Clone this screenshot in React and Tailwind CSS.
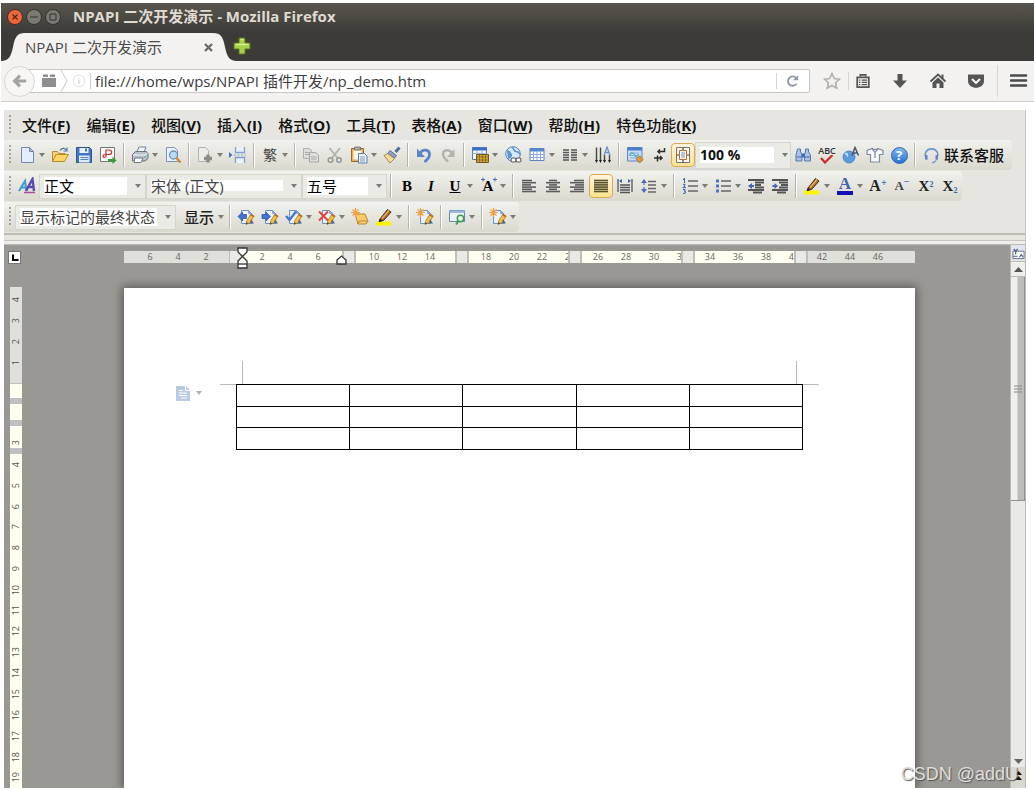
import React from 'react';
import { clsx } from 'clsx';

const Svg = ({ className = 'size-[18px]', box = '0 0 18 18', children }) => (
  <svg viewBox={box} className={clsx('shrink-0', className)} fill="none" aria-hidden="true">
    {children}
  </svg>
);

const Arrow = () => (
  <Svg box="0 0 6 4" className="w-[6px] h-[4px]"><path d="M0 0h6L3 4z" fill="#7b7b77" /></Svg>
);

/* ---------- toolbar icons ---------- */

const Lines = ({ rows, color = '#5c5c5c' }) => (
  <>
    {rows.map(([x1, x2], i) => (
      <path key={i} d={`M${x1} ${3.5 + i * 2.2}H${x2}`} stroke={color} strokeWidth="1.6" />
    ))}
  </>
);

// page with a pencil, shared by the review buttons
const PagePencil = ({ children }) => (
  <>
    <path d="M4.5 2.5h7l3 3v10h-10z" fill="#e9f1fb" stroke="#6d8fc4" />
    <path d="M11.5 2.500v3h3z" fill="#8fabd6" stroke="#6d8fc4" strokeWidth=".6" />
    <path d="M9 16.500l.8-4 4.200-6.500 3.200 2-4.200 6.500z" fill="#f7bf3f" stroke="#a0731f" strokeWidth=".7" />
    <path d="M13.500 6.500l3.400 2.200" stroke="#b4683c" strokeWidth="1.600" />
    <path d="M14 11l3 4.500h-4z" fill="#59667c" />
    <path d="M9 16.500l.5-2.200 1.600 1z" fill="#333" />
    {children}
  </>
);

const Spark = () => (
  <path d="M4.500 0v9M0 4.500h9M1.500 1.500l6 6M7.500 1.500l-6 6" stroke="#f0a040" strokeWidth="1.200" />
);

const Pen = () => (
  <>
    <path d="M1 13.5h15v4H1z" fill="#fdf500" />
    <path d="M5 11l7.500-9.500 3.500 2.600-7.500 8.400L4 13.500z" fill="#b06a26" stroke="#3f2a16" strokeWidth="1" />
    <path d="M7 10.500l7-8" stroke="#efb25c" strokeWidth="1.400" />
    <path d="M5 11l3 1.600L4 14z" fill="#222" />
  </>
);

const icons = {
  newDoc: <><path d="M3.500 1.500h8l4 4v11h-12z" fill="#e3edfb" stroke="#7289b3" /><path d="M11.500 1.500v4h4z" fill="#aebfdc" stroke="#7289b3" /></>,
  open: <><path d="M1.500 15.500V5.500h5l1.500 2h6v3" fill="#f5d27a" stroke="#b88a28" /><path d="M1.500 15.500l3.500-7h12.500l-4 7z" fill="#fbd566" stroke="#b88a28" /><path d="M9 4.500c2-3 5-2.500 6-.5m1-2.500v3.500h-3.500" stroke="#4f71a6" strokeWidth="1.200" /></>,
  save: <><path d="M1.500 1.500h13l2 2v13h-15z" fill="#4377c4" stroke="#295596" /><path d="M4.500 2h9v5h-9z" fill="#eaf1fb" /><path d="M4 9.500h10.500v7H4z" fill="#dfe9f7" /><path d="M5.500 11.500h8M5.500 13.500h8" stroke="#5a84c2" /><path d="M10 2.500h2v3h-2z" fill="#4377c4" /></>,
  pdf: <><path d="M1.500 1.500h14v14h-14z" fill="#f7f7f7" stroke="#777" /><path d="M7 11V4h3c3.500 0 3.500 4.500 0 4.500H6.500c-3 0-3.500 4 0 2.500" stroke="#c8323c" strokeWidth="1.200" /><path d="M9 13h4.500v-2.500l4 4-4 3.500v-2.500H9z" fill="#3c9a38" /></>,
  print: <><path d="M6 6l2-5h7l-2 5z" fill="#f4f8ff" stroke="#6d7f9c" /><path d="M1.500 8.500l3-3h11l1.500 2v5l-3 2.500H1.500z" fill="#b9c0cc" stroke="#6a7380" /><path d="M2 9h12l2.500-2" stroke="#f3f5f8" /><path d="M4 12h8l-2 4.500H3z" fill="#fff" stroke="#6b7686" /><path d="M13 11h2" stroke="#4c6" /></>,
  preview: <><path d="M2.500 1.500h8l3 3v11h-11z" fill="#e8f1fc" stroke="#7d93bb" /><circle cx="9.500" cy="9" r="4" fill="#b9dcf4" stroke="#6c95bd" strokeWidth="1.300" /><path d="M12.500 12l4 4.500" stroke="#d58a2c" strokeWidth="2.600" /></>,
  addPage: <><path d="M2.500 1.500h7l3 3v11h-10z" fill="#ececea" stroke="#b4b4b1" /><path d="M12 8.500v8M8 12.500h8" stroke="#8c8c8a" strokeWidth="3.400" /></>,
  pageBreak: <><path d="M6.500 1v5.500h9V1M6.500 17v-5.500h9V17" fill="#eaf1fb" stroke="#7f9fce" strokeWidth="1.300" /><path d="M0 6l3.500 3L0 12z" fill="#4a74b8" /><path d="M5 9h12" stroke="#8ba6d0" strokeDasharray="2 1.500" /></>,
  copy: <><path d="M1.500 2.500h6l2 2v8h-8z" fill="#dededc" stroke="#b0b0ae" /><path d="M7.500 6.500h6l3 2.500v7h-9z" fill="#dededc" stroke="#a6a6a4" /><path d="M3 6.500h4M3 8.500h4M9 11h5.500M9 13h5.500" stroke="#aaa" /></>,
  cut: <><path d="M3.500 2l8 10M14 2L6 12" stroke="#b0b0ae" strokeWidth="1.700" /><circle cx="4.500" cy="14" r="2.300" stroke="#989896" strokeWidth="1.500" /><circle cx="13" cy="14" r="2.300" stroke="#989896" strokeWidth="1.500" /></>,
  paste: <><path d="M1.500 2.500h12v13h-12z" fill="#e5b05a" stroke="#96692a" /><path d="M3.500 4.500h8v9h-8z" fill="#fff7e6" /><path d="M4.500 1h6v3h-6z" fill="#a8adb5" stroke="#666" strokeWidth=".7" /><path d="M8.500 7.500h6l2.500 2.500v7H8.500z" fill="#eef4fd" stroke="#5c7db3" /><path d="M10 11h5M10 13h5M10 15h5" stroke="#7d9bca" /></>,
  brush: <><path d="M16.500 1.500l-4 4.500" stroke="#4f6ca3" strokeWidth="3" /><path d="M7 4.500l6.500 5-2 2.500-7-4.500z" fill="#8aa0cc" stroke="#5d709b" /><path d="M4.500 7.500l7 5-4.500 4.500L1 9.500z" fill="#f3dca0" stroke="#a8863c" /></>,
  undo: <><path d="M5 7c3.500-4.500 9.500-3.500 9.500 1.500 0 3-2 5-5 7.500" stroke="#5b83c8" strokeWidth="2.800" /><path d="M2 2.500v8.500h8z" fill="#5b83c8" /></>,
  redo: <><path d="M13 7c-3-4-9-3.500-9 1 0 3 2 5 5 7.500" stroke="#b3b3b1" strokeWidth="2.400" /><path d="M15.500 3v8H8z" fill="#b3b3b1" /></>,
  tableEdit: <><path d="M1.500 1.500h14v12h-14z" fill="#f0f5fc" stroke="#587bb4" /><path d="M1.500 1.500h14v3h-14z" fill="#3f6fc0" /><path d="M1.500 7.500h14M6 4v9M11 4v4" stroke="#9fb4d8" /><path d="M5.500 8.500h12v8h-12z" fill="#d3a638" stroke="#775817" /><path d="M5.500 11h12M5.500 14h12M8.500 8.500v8M11.500 8.500v8M14.500 8.500v8" stroke="#7c5f20" strokeWidth=".7" /></>,
  globeLink: <><circle cx="9" cy="8" r="7.300" fill="#d7e8f8" stroke="#4f83c0" /><path d="M3 5c2 0 3 1 4 3s-1 4-3 4M8 1.500c3 1 1 4 4 4s3 1 4 3" fill="#5b95d6" stroke="#5b95d6" strokeWidth="1.500" /><rect x="7" y="12" width="5" height="4" rx="1.800" fill="#fff" stroke="#555" strokeWidth="1.100" /><rect x="12" y="12" width="5" height="4" rx="1.800" fill="#fff" stroke="#555" strokeWidth="1.100" /></>,
  table: <><path d="M2 2.500h14v12H2z" fill="#fff" stroke="#5d83bf" /><path d="M2 2.500h14v3H2z" fill="#5587d0" /><path d="M2 8.500h14M2 11.500h14M5.500 5v9M9 5v9M12.500 5v9" stroke="#8faad3" /></>,
  columns: <path d="M2 4h6M2 6.500h6M2 9h6M2 11.500h6M2 14h6M10 4h6M10 6.500h6M10 9h6M10 11.500h6M10 14h6" stroke="#555" strokeWidth="1.700" />,
  textDir: <><path d="M2.500 1.500v13M6.500 1.500v13M10.500 9v6M15.500 9v6" stroke="#444" strokeWidth="1.400" /><path d="M10 9.500L13 1l3 8.500M11 6.500h4" stroke="#6d91cb" strokeWidth="1.300" /><path d="M1 14h3l-1.500 3zM5 14h3l-1.500 3zM9 14h3l-1.500 3zM14 14h3l-1.500 3z" fill="#222" /></>,
  drawing: <><path d="M1.500 1.500h14.500v13.500H1.500z" fill="#c6dcf2" stroke="#5f86c2" /><path d="M1.500 1.500h14.500v3H1.500z" fill="#4d7ecb" /><path d="M4 7h9M4 9.500h9M4 12h6" stroke="#8fb5d8" /><path d="M3.500 10c1-4 4-4 5-1s3 1 4-1" stroke="#5faab9" strokeWidth="1.300" /><path d="M10 12.500l4-2.500 3 3.500-3.500 3.500z" fill="#e19b3c" stroke="#9a6320" strokeWidth=".7" /></>,
  marks: <path d="M14.500 2v3.500H8M10 3.500L8 5.500l2 2M4 12h8M10 10l2 2-2 2M7.500 9.500v6" stroke="#2d2d2d" strokeWidth="1.500" />,
  fitPage: <><path d="M2.500 1.500h13v15h-13z" fill="#fdf9ec" stroke="#777" /><path d="M5.500 4.500h7v9h-7z" fill="#fff" stroke="#c06a2c" /><path d="M7 7h4M7 9h4M7 11h4" stroke="#7e8da8" /><path d="M9 1.500v2.500M9 14v2.500M2.500 9H5M13 9h2.500" stroke="#444" strokeWidth="1.200" /></>,
  find: <><path d="M3.500 3h3v3l1.500 2v7h-6V9zM11.500 3h3v3l2 3v6h-6V8l1-2z" fill="#a9c2ea" stroke="#5877b2" /><path d="M7.500 7.500h3v4h-3z" fill="#4a6cab" /><path d="M2.500 11h5M11 11h5" stroke="#4a6cab" /></>,
  globeA: <><circle cx="7" cy="11" r="6" fill="#5a9be0" stroke="#4479bd" strokeWidth=".8" /><path d="M3 8c2-1 3 1 2 2.500" stroke="#c6e2f8" strokeWidth="1.700" /><path d="M10 9.500L13 1.500l3.500 8M11 7h4.500" stroke="#4b5468" strokeWidth="1.500" /></>,
  shirt: <><path d="M6 2.500c1.500 1.500 4.500 1.500 6 0l5 2v4h-3.500v7.500h-9V8.500H1v-4z" fill="#f5f7fa" stroke="#7f8b9f" strokeWidth="1.200" /><path d="M6 3l3 3.500L12 3M9 7v5" stroke="#6e7b91" strokeWidth="1.100" /></>,
  headset: <><path d="M4 12.500C0 7 4 2 9 2s9 5 5 10.500" stroke="#7296d4" strokeWidth="1.700" /><path d="M3.500 8.500v5M14.500 8.500v5" stroke="#5e85ca" strokeWidth="2.500" /><path d="M14 14c-1 2-2.500 2.500-4.500 2.500" stroke="#7296d4" strokeWidth="1.200" /></>,
  styles: <><path d="M1 14L7 4l1.500 10M3.500 10.500H8" stroke="#3e9bd0" strokeWidth="2" /><path d="M8 14l6.500-12L16 14M10.500 10H16" stroke="#5a4bb0" strokeWidth="2.400" /><path d="M6 15.500h11" stroke="#a94b9b" strokeWidth="1.500" /></>,
  alignLeft: <Lines rows={[[2, 12], [2, 16], [2, 11], [2, 16], [2, 12], [2, 16]]} />,
  alignCenter: <Lines rows={[[5, 13], [2, 16], [5, 13], [2, 16], [5, 13], [2, 16]]} />,
  alignRight: <Lines rows={[[6, 16], [2, 16], [7, 16], [2, 16], [6, 16], [2, 16]]} />,
  justify: <Lines rows={[[2, 16], [2, 16], [2, 16], [2, 16], [2, 16], [2, 16]]} color="#55502f" />,
  distribute: <><path d="M2 2v13M16 2v13" stroke="#555" strokeWidth="1.300" /><path d="M4 8h10M4 10.500h10M4 13h10M4 15.500h10" stroke="#555" strokeWidth="1.500" /><path d="M3 4l3-2v4zM15 4l-3-2v4z" fill="#3f66b5" /></>,
  spacing: <><path d="M8 4.500h8M8 8h8M8 11.500h8M8 15h8" stroke="#666" strokeWidth="1.400" /><path d="M4 2L1 6h6zM4 16l-3-4h6z" fill="#4a6db5" /><path d="M4 5v3M4 10v3" stroke="#4a6db5" strokeWidth="1.200" /></>,
  numbers: <><path d="M7 4h10M7 9h10M7 14h10" stroke="#666" strokeWidth="1.500" /><path d="M2 2.500l1.500-.8V6M2 7.500c3-1 2 1.500.5 3H5M2 12.500c3-.5 2 1.500 1 1.500 2 0 2 3-1 2.500" stroke="#3d67b8" strokeWidth="1.100" /></>,
  bullets: <><path d="M7 4h10M7 9h10M7 14h10" stroke="#666" strokeWidth="1.500" /><path d="M2 2.500h3v3H2zM2 7.500h3v3H2zM2 12.500h3v3H2z" fill="#4a73c0" /></>,
  outdent: <><path d="M1 3h16M8 5.500h9M8 8h6M8 10.500h9M1 13h16M6 15.500h9" stroke="#555" strokeWidth="1.800" /><path d="M1 9l4-3v2h2v2H5v2z" fill="#3d67b8" /></>,
  indent: <><path d="M1 3h16M8 5.500h9M10 8h7M8 10.500h9M1 13h16M6 15.500h9" stroke="#555" strokeWidth="1.800" /><path d="M7 9L3.500 6v2h-2v2h2v2z" fill="#3d67b8" /></>,
  pen: <Pen />,
  prev: <PagePencil><path d="M1 8.500l4.500-4.500v2.500h4v4h-4V13z" fill="#3f74cf" stroke="#27509c" strokeWidth=".7" /></PagePencil>,
  next: <PagePencil><path d="M9.500 8.500L5 4v2.500H1v4h4V13z" fill="#3f74cf" stroke="#27509c" strokeWidth=".7" /></PagePencil>,
  accept: <PagePencil><path d="M1 8l3.500 4L11 3.500" stroke="#3f74cf" strokeWidth="2.200" /></PagePencil>,
  reject: <PagePencil><path d="M1 3.500l9 9M10 3.500l-9 9" stroke="#e0443a" strokeWidth="2" /></PagePencil>,
  comment: <><path d="M4 6h10l3 7.500-2 2.500H7z" fill="#f9cd6e" stroke="#b98530" /><path d="M7 16l1-3h9" stroke="#b98530" /><Spark /></>,
  track: <PagePencil><Spark /></PagePencil>,
  pane: <><path d="M1.500 2.500h15v11h-15z" fill="#edf3fa" stroke="#6685ad" /><path d="M1.500 2.500h15v2.500h-15z" fill="#9db9de" /><circle cx="12.500" cy="10.500" r="3.200" fill="#e4f5e6" stroke="#3d9d54" strokeWidth="1.500" /><path d="M10.500 13L8 16.500" stroke="#3d9d54" strokeWidth="2" /></>,
};

/* ---------- toolbar pieces ---------- */

const Tool = ({ icon, label, active, menu, children }) => (
  <div className="flex items-center shrink-0">
    <button
      aria-label={label}
      className={clsx(
        'w-6 h-6 flex items-center justify-center text-black',
        active && 'rounded-sm border border-[#d9a95a] bg-linear-to-b from-[#fdf6dc] to-[#fae28c]'
      )}
    >
      {icon ? <Svg>{icons[icon]}</Svg> : children}
    </button>
    {menu && <span className="w-[9px] flex"><Arrow /></span>}
  </div>
);

const Sep = () => (
  <div className="w-2 flex justify-center shrink-0"><div className="w-0.5 h-6 bg-[#b4b4ac] border-r border-white" /></div>
);

const Grip = () => (
  <div className="w-0.5 h-5 ml-[5px] mr-1 shrink-0 bg-[repeating-linear-gradient(#a3a39b_0_2px,transparent_2px_4px)]" />
);

const Bar = ({ children }) => (
  <div className="w-fit h-[31px] flex items-center rounded-r-sm border-t border-[#e6e5e0] bg-linear-to-b from-[#f2f2ee] to-[#d9d9cf]">
    <Grip />
    {children}
  </div>
);

const Combo = ({ label, value, className, tone = 'bg-white text-black' }) => (
  <div className="flex items-center h-[25px] border border-[#d5d4cd] bg-[#ebebe6] pl-1 shrink-0">
    <select aria-label={label} className={clsx('appearance-none h-[18px] leading-[18px] text-[15px] outline-none', tone, className)}>
      <option>{value}</option>
    </select>
    <span className="w-[18px] flex justify-end pr-1"><Arrow /></span>
  </div>
);

const menus = [
  ['文件', 'F'], ['编辑', 'E'], ['视图', 'V'], ['插入', 'I'], ['格式', 'O'],
  ['工具', 'T'], ['表格', 'A'], ['窗口', 'W'], ['帮助', 'H'], ['特色功能', 'K'],
];

const MenuBar = () => (
  <nav className="h-[29px] flex items-center">
    <Grip />
    <div className="flex gap-4 pl-[7px]">
      {menus.map(([name, key]) => (
        <button key={key} className="text-[15px] leading-5 font-medium text-[#111] whitespace-nowrap">
          {name}<span className="font-bold">(<u className="underline-offset-2">{key}</u>)</span>
        </button>
      ))}
    </div>
  </nav>
);

const StandardBar = () => (
  <Bar>
    <Tool icon="newDoc" label="新建" menu />
    <Tool icon="open" label="打开" />
    <Tool icon="save" label="保存" />
    <Tool icon="pdf" label="输出为PDF" />
    <Sep />
    <Tool icon="print" label="打印" menu />
    <Tool icon="preview" label="打印预览" />
    <Sep />
    <Tool icon="addPage" label="插入页" menu />
    <Tool icon="pageBreak" label="分页" />
    <Sep />
    <Tool label="简繁转换" menu><span className="text-[14px] leading-5 text-[#444]">繁</span></Tool>
    <Sep />
    <Tool icon="copy" label="复制" />
    <Tool icon="cut" label="剪切" />
    <Tool icon="paste" label="粘贴" menu />
    <Tool icon="brush" label="格式刷" />
    <Sep />
    <Tool icon="undo" label="撤销" />
    <Tool icon="redo" label="恢复" />
    <Sep />
    <Tool icon="tableEdit" label="绘制表格" menu />
    <Tool icon="globeLink" label="超链接" />
    <Tool icon="table" label="插入表格" menu />
    <Tool icon="columns" label="分栏" menu />
    <Tool icon="textDir" label="文字方向" />
    <Sep />
    <Tool icon="drawing" label="绘图" />
    <Tool icon="marks" label="显示段落标记" />
    <Tool icon="fitPage" label="整页" active />
    <div className="flex items-center h-[27px] border border-[#d5d4cd] bg-[#ebebe6] pl-1">
      <input aria-label="显示比例" defaultValue="100 %" className="w-[74px] h-4 bg-white text-[14px] leading-4 font-bold text-[#111] outline-none" />
      <span className="w-4 flex justify-end pr-0.5"><Arrow /></span>
    </div>
    <Tool icon="find" label="查找" />
    <Tool label="拼写检查">
      <span className="flex flex-col items-center">
        <span className="text-[9px] leading-[9px] font-semibold text-[#333]">ABC</span>
        <Svg box="0 0 14 9" className="w-[14px] h-[9px]"><path d="M1 3l4 4.500L12.500 0" stroke="#d02b2b" strokeWidth="2.200" /></Svg>
      </span>
    </Tool>
    <Tool icon="globeA" label="翻译" />
    <Tool icon="shirt" label="皮肤" />
    <Tool label="帮助">
      <span className="size-[17px] rounded-full border border-[#2b66b0] bg-linear-to-b from-[#7fb6ee] to-[#2573d0] text-white text-[13px] leading-[15px] font-bold text-center">?</span>
    </Tool>
    <Sep />
    <button className="flex items-center gap-1 pl-1 pr-2 text-[15px] leading-5 font-medium text-[#111] whitespace-nowrap">
      <Svg className="size-[17px]">{icons.headset}</Svg>联系客服
    </button>
  </Bar>
);

const serif = "font-['Liberation_Serif',serif]";

const FormatBar = () => (
  <Bar>
    <Tool icon="styles" label="样式和格式" />
    <Combo label="样式" value="正文" className="w-[83px]" />
    <Combo label="字体" value="宋体 (正文)" tone="bg-[linear-gradient(transparent_3px,#fff_3px_14px,transparent_14px)] text-[#444]" className="w-[132px]" />
    <Combo label="字号" value="五号" className="w-[61px]" />
    <Sep />
    <Tool label="加粗"><span className={clsx(serif, 'text-[15px] font-black')}>B</span></Tool>
    <Tool label="倾斜"><span className={clsx(serif, 'text-[15px] font-bold italic')}>I</span></Tool>
    <Tool label="下划线" menu><span className={clsx(serif, 'text-[15px] font-bold underline')}>U</span></Tool>
    <Tool label="字符间距" menu>
      <span className={clsx(serif, 'relative text-[15px] font-bold')}>
        A
        <Svg box="0 0 16 5" className="absolute -left-0.5 top-0.5 w-4 h-[5px]"><path d="M0 2.500h4M2 .5v4M12 2.500h4M14 .5v4" stroke="#4a6db5" /></Svg>
      </span>
    </Tool>
    <Sep />
    <Tool icon="alignLeft" label="左对齐" />
    <Tool icon="alignCenter" label="居中" />
    <Tool icon="alignRight" label="右对齐" />
    <Tool icon="justify" label="两端对齐" active />
    <Tool icon="distribute" label="分散对齐" />
    <Tool icon="spacing" label="行距" menu />
    <Sep />
    <Tool icon="numbers" label="编号" menu />
    <Tool icon="bullets" label="项目符号" menu />
    <Tool icon="outdent" label="减少缩进" />
    <Tool icon="indent" label="增加缩进" />
    <Sep />
    <Tool icon="pen" label="突出显示" menu />
    <Tool label="字体颜色" menu>
      <span className={clsx(serif, 'w-4 border-b-4 border-[#1010b8] text-[17px] leading-[14px] font-bold text-[#3f63ae] text-center')}>A</span>
    </Tool>
    <Tool label="增大字号"><span className={clsx(serif, 'text-[16px] font-bold text-[#222]')}>A<sup className="text-[10px] text-[#3f63ae]">+</sup></span></Tool>
    <Tool label="减小字号"><span className={clsx(serif, 'text-[13px] font-bold text-[#444]')}>A<sup className="text-[10px] text-[#3f63ae]">−</sup></span></Tool>
    <Tool label="上标"><span className={clsx(serif, 'text-[15px] font-bold text-[#222]')}>X<sup className="text-[8px] text-[#3f63ae]">2</sup></span></Tool>
    <Tool label="下标"><span className={clsx(serif, 'text-[15px] font-bold text-[#222]')}>X<sub className="text-[8px] text-[#3f63ae]">2</sub></span></Tool>
  </Bar>
);

const ReviewBar = () => (
  <Bar>
    <Combo label="显示以审阅" value="显示标记的最终状态" tone="bg-white text-[#444]" className="w-[137px]" />
    <button className="flex items-center gap-1 pl-2 pr-0.5 text-[15px] leading-5 font-medium text-[#222] whitespace-nowrap">显示 <Arrow /></button>
    <Sep />
    <Tool icon="prev" label="前一处修订" />
    <Tool icon="next" label="后一处修订" />
    <Tool icon="accept" label="接受修订" menu />
    <Tool icon="reject" label="拒绝修订" menu />
    <Tool icon="comment" label="插入批注" />
    <Tool icon="pen" label="突出显示" menu />
    <Sep />
    <Tool icon="track" label="修订" />
    <Sep />
    <Tool icon="pane" label="审阅窗格" menu />
    <Sep />
    <Tool icon="track" label="修订选项" menu />
  </Bar>
);

/* ---------- browser chrome ---------- */

const TitleBar = () => (
  <header className="bg-linear-to-b from-[#5a564e] to-[#3c3b37] to-50%">
    <div className="h-[27px] flex items-center pl-1.5 gap-[3px]">
      <button aria-label="关闭" className="size-4 rounded-full border border-[#4b2a1c] bg-[#ec6640] flex items-center justify-center">
        <Svg box="0 0 6 6" className="size-[6px]"><path d="M.5.5l5 5m0-5l-5 5" stroke="#5b2410" strokeWidth="1.300" /></Svg>
      </button>
      <button aria-label="最小化" className="size-4 rounded-full border border-[#33322e] bg-[#7b7973] flex items-center justify-center">
        <Svg box="0 0 8 8" className="size-2"><path d="M0 4h8" stroke="#33322e" /></Svg>
      </button>
      <button aria-label="最大化" className="size-4 rounded-full border border-[#33322e] bg-[#7b7973] flex items-center justify-center">
        <Svg box="0 0 8 8" className="size-2"><path d="M1 1h6v6H1z" stroke="#33322e" /></Svg>
      </button>
      <h1 className="pl-[9px] pb-0.5 text-[15px] leading-5 text-[#dfdbd2] whitespace-nowrap font-bold">NPAPI 二次开发演示 - Mozilla Firefox</h1>
    </div>
    <div className="h-[31px] flex items-end">
      <Svg box="0 0 24 28" className="w-6 h-7"><path d="M0 28C8 28 10 23 12 14 14 4 16 0 24 0v28z" fill="#f3f2f1" /></Svg>
      <div className="h-7 w-[188px] flex items-center justify-between bg-[#f3f2f1] text-[15px] leading-5 text-[#4a4a4a]">
        <span className="whitespace-nowrap">NPAPI 二次开发演示</span>
        <button aria-label="关闭标签页"><Svg box="0 0 9 9" className="size-[9px]"><path d="M1 1l7 7M8 1L1 8" stroke="#6a6a6a" strokeWidth="2.300" /></Svg></button>
      </div>
      <Svg box="0 0 24 28" className="w-6 h-7"><path d="M24 28C16 28 14 23 12 14 10 4 8 0 0 0v28z" fill="#f3f2f1" /></Svg>
      <button aria-label="新标签页" className="pb-1.5 -ml-1">
        <Svg><path d="M6 1h6v5h5v6h-5v5H6v-5H1V6h5z" fill="#a9cf46" stroke="#55752a" /><path d="M7.500 2.500h3M2.500 7.500h13" stroke="#d6ee8f" strokeWidth="1.500" /></Svg>
      </button>
    </div>
  </header>
);

const NavBar = () => (
  <div className="h-[41px] flex items-center pl-[3px] bg-[#f3f2f1] border-b border-[#cfcecc]">
    <button aria-label="后退" className="z-10 size-[31px] shrink-0 rounded-full border border-[#d6d5d2] bg-[#f7f6f5] flex items-center justify-center">
      <Svg className="size-4"><path d="M9 3L3 9l6 6M3.500 9H16" stroke="#a3a3a3" strokeWidth="3.600" /></Svg>
    </button>
    <div className="flex-1 -ml-2 h-6 flex items-center border border-[#c6c5c2] bg-white rounded-xs">
      <Svg className="size-[18px] ml-3"><path d="M2 6h14v9H2z" fill="#8e8e8e" /><path d="M3 2.500h5V5H3zM10 2.500h5V5h-5z" fill="#8e8e8e" /></Svg>
      <Svg box="0 0 8 22" className="w-2 h-[22px] ml-0.5"><path d="M1 0l6 11-6 11" stroke="#c8c8c8" /></Svg>
      <Svg className="size-[14px] ml-1"><circle cx="9" cy="9" r="7.500" stroke="#d6d6d6" /><path d="M9 7.500V13M9 4.500v1.500" stroke="#d6d6d6" strokeWidth="1.600" /></Svg>
      <div className="w-px h-4 ml-1 bg-[#cfcfcf]" />
      <input aria-label="地址" defaultValue="file:///home/wps/NPAPI 插件开发/np_demo.htm" className="flex-1 min-w-0 ml-1 text-[15px] leading-5 text-[#3c3c3c] outline-none" />
      <div className="w-px h-4 bg-[#d5d5d5]" />
      <button aria-label="刷新" className="w-8 flex justify-center">
        <Svg className="size-[14px]"><path d="M13.500 12.500A6 6 0 1 1 13 5" stroke="#8d98a6" strokeWidth="2.400" /><path d="M15.500 1.500V8H9z" fill="#8d98a6" /></Svg>
      </button>
    </div>
    <div className="flex items-center pl-2">
      <button aria-label="收藏" className="w-7 flex justify-center">
        <Svg><path d="M9 1.500l2.300 5 5.200.6-3.900 3.600 1.100 5.500L9 13.500l-4.700 2.700 1.100-5.500L1.500 7.100l5.200-.6z" stroke="#b0b0b0" strokeWidth="1.600" /></Svg>
      </button>
      <div className="w-px h-[18px] ml-0.5 bg-[#d5d4d2]" />
      <button aria-label="书签" className="w-7 flex justify-center">
        <Svg className="size-4"><path d="M2.500 5h13v11h-13z" stroke="#555" strokeWidth="2" /><path d="M6 4V2h6v2" stroke="#555" strokeWidth="2" /><path d="M4.500 8h1.500M7.500 8h6M4.500 10.500H6M7.500 10.500h6M4.500 13H6M7.500 13h6" stroke="#555" strokeWidth="1.400" /></Svg>
      </button>
      <button aria-label="下载" className="w-[38px] flex justify-center ml-1">
        <Svg><path d="M6.500 2h5v6.500h4.500L9 16 2 8.500h4.500z" fill="#555" /></Svg>
      </button>
      <button aria-label="主页" className="w-[38px] flex justify-center">
        <Svg><path d="M1.500 9.500L9 2.500l7.500 7" stroke="#555" strokeWidth="1.800" /><path d="M3.500 10.500L9 5.500l5.500 5V16h-4v-4.500h-3V16h-4z" fill="#555" /><path d="M12.500 2.500h2v4h-2z" fill="#555" /></Svg>
      </button>
      <button aria-label="Pocket" className="w-[38px] flex justify-center">
        <Svg><path d="M1 2.500h16V9c0 9-16 9-16 0z" fill="#555" /><path d="M5 7l4 4 4-4" stroke="#fff" strokeWidth="1.900" /></Svg>
      </button>
      <div className="w-px h-8 ml-0.5 bg-[#d5d4d2]" />
      <button aria-label="菜单" className="w-9 flex justify-center pl-1.5">
        <Svg><path d="M1 3.500h15M1 8.500h15M1 13.500h15" stroke="#4b4b4b" strokeWidth="2.600" strokeLinecap="round" /></Svg>
      </button>
    </div>
  </div>
);

/* ---------- document area ---------- */

// one entry per table column shown on the ruler
const rulerColumns = [
  { pad: 'pl-[5px]', marks: [2, 4, 6] },
  { pad: 'pl-1', marks: [10, 12, 14] },
  { pad: 'pl-[3px]', marks: [18, 20, 22, 24] },
  { pad: 'pl-0.5', marks: [26, 28, 30, 32] },
  { pad: 'pl-px', marks: [34, 36, 38, 40] },
];

const Mark = ({ children }) => <span className="w-7 shrink-0 text-center">{children}</span>;

const HRuler = () => (
  <div className="w-[791px] h-3 mx-auto flex shrink-0 bg-[#e0e0db] text-[9px] leading-3 text-[#67665a] relative">
    <div className="w-[105px] pl-3 flex shrink-0"><Mark>6</Mark><Mark>4</Mark><Mark>2</Mark></div>
    <div className="w-[14px] shrink-0 border-l border-[#bdbdb8] bg-[#e9e9e6]" />
    {rulerColumns.map(({ pad, marks }) => (
      <React.Fragment key={marks[0]}>
        <div className={clsx('w-[99px] shrink-0 flex bg-[#fffff2]', pad)}>
          {marks.map((m) => <Mark key={m}>{m}</Mark>)}
        </div>
        <div className="z-10 w-[14px] shrink-0 border-x-2 border-[#bfbfba] bg-[#e9e9e6]" />
      </React.Fragment>
    ))}
    <div className="flex z-10"><Mark>42</Mark><Mark>44</Mark><Mark>46</Mark></div>
    {/* indent markers sit over the ruler */}
    <Svg box="0 0 11 22" className="z-20 absolute left-[113px] -top-1 w-[11px] h-[22px]">
      <path d="M1 1h9v4L5.500 9.500 1 5zM5.500 9.500L10 14v7H1v-7z" fill="#fff" stroke="#333" strokeWidth="1.300" /><path d="M1 17h9" stroke="#333" strokeWidth="1.300" />
    </Svg>
    <Svg box="0 0 11 10" className="z-20 absolute left-[212px] top-1 w-[11px] h-[10px]">
      <path d="M1 9V5l4.500-4L10 5v4z" fill="#fff" stroke="#333" strokeWidth="1.300" />
    </Svg>
  </div>
);

const VMark = ({ children }) => (
  <span className="flex items-center justify-center"><span className="[writing-mode:vertical-rl] rotate-180 leading-3">{children}</span></span>
);

const VRuler = () => (
  <div className="w-3 flex-1 flex flex-col bg-[#bfbfbf] text-[9px] text-[#55544a]">
    <div className="h-24 pt-0.5 grid auto-rows-[21px] bg-[#e0e0db]">
      {[4, 3, 2, 1].map((n) => <VMark key={n}>{n}</VMark>)}
    </div>
    <div className="h-[14px] mt-px bg-[#fffff2]" />
    <div className="h-4 mt-1.5 bg-[#fffff2]" />
    <div className="h-[22px] mt-1.5 pt-3 grid bg-[#fffff2]"><VMark>3</VMark></div>
    <div className="flex-1 mt-1.5 grid auto-rows-fr bg-[#fffff2]">
      {[4, 5, 6, 7, 8, 9, 10, 11, 12, 13, 14, 15, 16, 17, 18, 19].map((n) => <VMark key={n}>{n}</VMark>)}
    </div>
  </div>
);

const Page = () => (
  <div className="w-[791px] flex-1 mx-auto mt-[25px] pt-[73px] bg-white shadow-[0_0_9px_2px_rgba(0,0,0,0.4)]">
    <div className="ml-[118px] w-[555px] h-[23px] border-x border-[#b9b9b9]" />
    <div className="flex pl-[52px]">
      <button aria-label="段落布局" className="w-11 h-[18px] flex items-center gap-1.5 shrink-0">
        <Svg box="0 0 14 15" className="w-[14px] h-[15px]"><path d="M0 0h10l4 4v11H0z" fill="#b9cbe2" /><path d="M9.500 0v4.500H14" stroke="#fff" /><path d="M3 4.500h4M3 7h8M3 9.500h8M5 12h6" stroke="#fff" strokeWidth="1.200" /></Svg>
        <span className="opacity-60"><Arrow /></span>
      </button>
      <div className="w-[599px] px-4 border-t border-[#b9b9b9]">
        <table className="w-full h-[66px] -mt-px table-fixed border-collapse">
          <tbody>
            {[0, 1, 2].map((r) => (
              <tr key={r}>
                {[0, 1, 2, 3, 4].map((c) => <td key={c} className="border border-black p-0" />)}
              </tr>
            ))}
          </tbody>
        </table>
      </div>
    </div>
  </div>
);

const ScrollBar = () => (
  <div className="w-4 shrink-0 flex flex-col items-center border-x border-[#b9b9b4] bg-[#e9e9e7]">
    <button aria-label="标尺" className="w-full h-4 flex items-center justify-center bg-[#e1e6ee]">
      <Svg box="0 0 14 14" className="size-[13px]"><path d="M1 4.500h12v8H1z" fill="#fff" stroke="#5d6f8e" /><path d="M2 2l2 3 2-3M4 5v3M8 11l2-3 2 3M1 10h5" stroke="#4b5c7c" strokeWidth="1.200" /></Svg>
    </button>
    <button aria-label="向上滚动" className="w-full h-4 flex items-center justify-center border-y border-[#bcbcb7] bg-[#eeeeec]">
      <Svg box="0 0 9 5" className="w-[9px] h-[5px]"><path d="M0 5h9L4.500 0z" fill="#555" /></Svg>
    </button>
    <div className="w-full h-56 flex items-center justify-center border-b border-r border-[#8f8f8a] bg-linear-to-r from-[#efefed] from-45% to-[#bdbdb8] to-55%">
      <Svg box="0 0 8 8" className="size-2"><path d="M0 1h8M0 4h8M0 7h8" stroke="#8a8a86" /></Svg>
    </div>
    <div className="flex-1" />
    <button aria-label="向下滚动" className="h-3 flex items-center"><Svg box="0 0 9 5" className="w-[9px] h-[5px]"><path d="M0 0h9L4.500 5z" fill="#666" /></Svg></button>
    <button aria-label="前一页" className="w-full h-[21px] pt-1 flex justify-center bg-[#d9d8d0]"><Svg box="0 0 7 9" className="w-[7px] h-[9px]"><path d="M0 4h7L3.500 0zM0 9h7L3.500 5z" fill="#111" /></Svg></button>
  </div>
);

const Workspace = () => (
  <div className="flex-1 min-h-0 flex bg-[#999893]">
    <div className="w-[25px] pt-1.5 flex flex-col shrink-0">
      <div className="size-[13px] ml-1 mb-[23px] bg-white border border-[#777] shrink-0">
        <Svg box="0 0 11 11" className="size-[11px]"><path d="M4 2.500V8h5.500" stroke="#000" strokeWidth="2" /></Svg>
      </div>
      <div className="flex-1 flex ml-1.5"><div className="flex flex-col"><VRuler /></div></div>
    </div>
    <main className="flex-1 min-w-0 pt-1.5 flex flex-col overflow-hidden">
      <HRuler />
      <Page />
    </main>
    <ScrollBar />
  </div>
);

const App = () => (
  <div className="h-screen flex flex-col overflow-hidden bg-white pt-[3px] pb-0.5 pl-px font-['Open_Sans','Noto_Sans_CJK_SC',sans-serif]">
    <TitleBar />
    <NavBar />
    <div className="flex-1 min-h-0 flex flex-col mt-2 ml-[3px] mr-2 relative">
      <div className="bg-[#e6e5e0] border-r border-[#c5c5bf]">
        <MenuBar />
        <StandardBar />
        <FormatBar />
        <ReviewBar />
        <div className="h-[13px] pt-px"><div className="h-3 border-t-2 border-b border-[#bdbdb5] flex items-end"><div className="w-full h-1 border-t border-[#c4c4bd] bg-[#efeeea]" /></div></div>
      </div>
      <Workspace />
      <div className="absolute right-2 bottom-0.5 z-30 text-[18px] leading-6 text-[#dededb] font-['Liberation_Sans',sans-serif] [text-shadow:1px_1px_1px_#555]">CSDN @addU</div>
    </div>
  </div>
);

export default App;
